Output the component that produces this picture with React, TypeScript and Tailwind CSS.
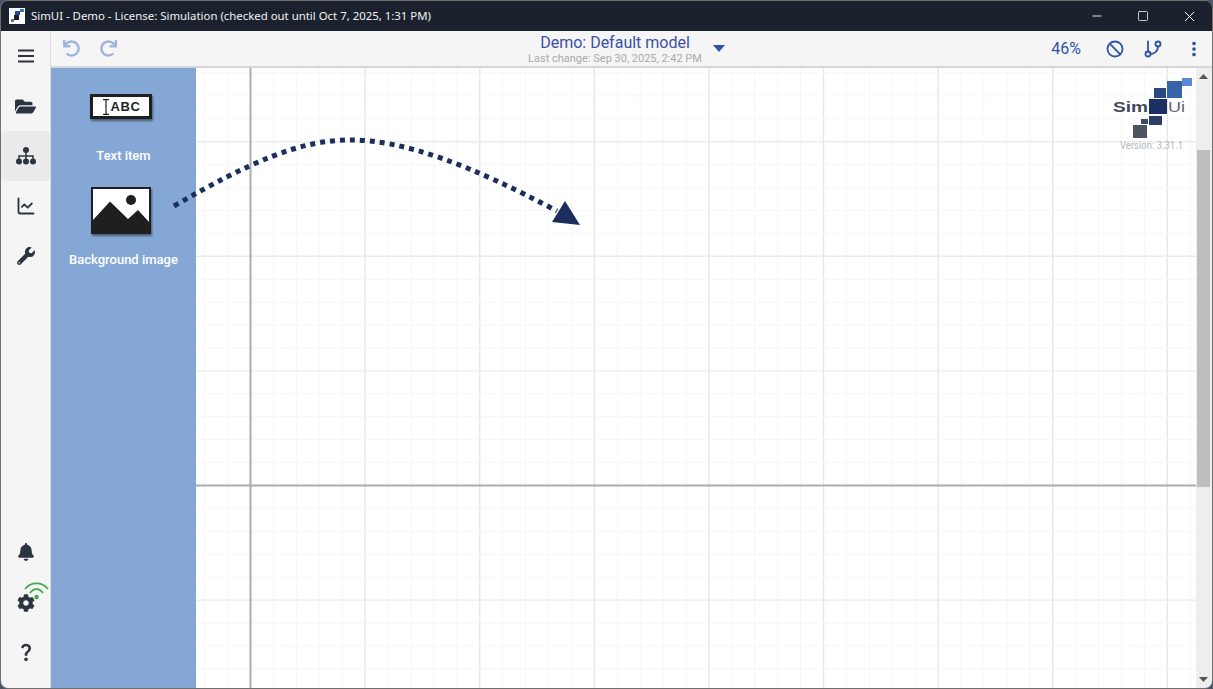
import React from 'react';
import { Ban, ChartLine, GitBranch, Minus, Square, X } from 'lucide-react';
import { FaBell, FaCog, FaFolderOpen, FaRedo, FaUndo, FaWrench } from 'react-icons/fa';
import { MdMoreVert, MdQuestionMark } from 'react-icons/md';

const MINOR_STEP = 22.92;
const AXIS_X = 250.5;
const AXIS_Y = 485.5;

function gridLines(start: number, end: number) {
  const values: number[] = [];
  for (let value = start; value <= end; value += MINOR_STEP) {
    values.push(value);
  }
  return values;
}

function CanvasGrid() {
  const xs = gridLines(AXIS_X - 3 * MINOR_STEP, 1196);
  const ys = gridLines(AXIS_Y - 18 * MINOR_STEP, 688);

  return (
    <svg className="absolute inset-0" width="1000" height="620" viewBox="196 68 1000 620">
      {xs.map((x, index) => {
        const isMajor = (index - 3) % 5 === 0;
        return <line key={x} x1={x} x2={x} y1="68" y2="688" stroke={isMajor ? '#e6e6e6' : '#f6f6f6'} strokeWidth={isMajor ? 1.4 : 1} />;
      })}
      {ys.map((y, index) => {
        const isMajor = (index - 18) % 5 === 0;
        return <line key={y} x1="196" x2="1196" y1={y} y2={y} stroke={isMajor ? '#ececec' : '#f6f6f6'} strokeWidth={isMajor ? 1.4 : 1} />;
      })}
      <line x1={AXIS_X} x2={AXIS_X} y1="68" y2="688" stroke="#adadad" strokeWidth="2" />
      <line x1="196" x2="1196" y1={AXIS_Y} y2={AXIS_Y} stroke="#adadad" strokeWidth="2" />
    </svg>
  );
}

function HintArrow() {
  return (
    <svg className="absolute left-[160px] top-[120px]" width="430" height="120" viewBox="160 120 430 120">
      <path
        d="M174 206 C 250 162, 300 140, 350 140 C 405 140, 470 165, 557 211"
        fill="none"
        stroke="#1c2f5c"
        strokeWidth="5"
        strokeDasharray="5 5"
      />
      <polygon points="565,201 552,222 580,225" fill="#1c2f5c" />
    </svg>
  );
}

function Logo() {
  return (
    <svg className="absolute left-[1105px] top-[72px]" width="92" height="84" viewBox="1105 72 92 84">
      <rect x="1182" y="78" width="10" height="8" fill="#5b87d8" />
      <rect x="1167" y="81" width="15" height="17" fill="#3763a8" />
      <rect x="1154" y="88" width="12" height="10" fill="#274a86" />
      <rect x="1149" y="99" width="18" height="15" fill="#1c2f62" />
      <rect x="1149" y="116" width="13" height="9" fill="#2b3f66" />
      <rect x="1141" y="119" width="7" height="5" fill="#3a4a68" />
      <rect x="1133" y="125" width="14" height="13" fill="#4e5560" />
      <text x="1113" y="112" textLength="35" lengthAdjust="spacingAndGlyphs" fontFamily="Liberation Sans, sans-serif" fontSize="14" fontWeight="700" fill="#3d4a59">Sim</text>
      <text x="1168" y="112" textLength="17" lengthAdjust="spacingAndGlyphs" fontFamily="Liberation Sans, sans-serif" fontSize="14" fill="#5a6572">Ui</text>
      <text x="1120" y="149" textLength="63" lengthAdjust="spacingAndGlyphs" fontFamily="Roboto, sans-serif" fontSize="10" fill="#b4b8bd">Version: 3.31.1</text>
    </svg>
  );
}

function AppMark() {
  return (
    <svg width="16" height="16" viewBox="0 0 16 16">
      <rect width="16" height="16" fill="#ffffff" />
      <rect x="11" y="1" width="4" height="3" fill="#3b78c9" />
      <rect x="6" y="3" width="5" height="4" fill="#1f4f92" />
      <rect x="5" y="7" width="5" height="5" fill="#1b222d" />
      <rect x="2" y="11" width="3" height="3" fill="#6b7280" />
    </svg>
  );
}

function ModelTreeIcon() {
  return (
    <svg width="20" height="18" viewBox="0 0 20 18" fill="#2b3440">
      <circle cx="10" cy="3" r="3" />
      <circle cx="3" cy="14.500" r="3" />
      <circle cx="10" cy="14.500" r="3" />
      <circle cx="17" cy="14.500" r="3" />
      <path d="M10 5v7M3 12V9h14v3" fill="none" stroke="#2b3440" strokeWidth="1.500" />
    </svg>
  );
}

function SideButton({ active, children }: { active?: boolean; children: React.ReactNode }) {
  return (
    <div className={`relative flex h-[50px] w-full items-center justify-center rounded text-[#2b3440] ${active ? 'bg-[#ebebeb]' : ''}`}>
      {children}
    </div>
  );
}

function Sidebar() {
  return (
    <div className="flex w-[50px] shrink-0 flex-col border-r border-[#dcdcdc] bg-[#f5f5f5] pb-[11px]">
      <SideButton>
        <svg width="16" height="14" viewBox="0 0 16 14" fill="#2b3440">
          <rect y="0.500" width="16" height="2" />
          <rect y="6" width="16" height="2" />
          <rect y="11.500" width="16" height="2" />
        </svg>
      </SideButton>
      <SideButton><FaFolderOpen size={21} /></SideButton>
      <SideButton active><ModelTreeIcon /></SideButton>
      <SideButton><ChartLine size={20} strokeWidth={2.2} /></SideButton>
      <SideButton><FaWrench size={18} /></SideButton>
      <div className="flex-1" />
      <SideButton><FaBell size={18} /></SideButton>
      <SideButton>
        <FaCog size={18} className="mt-[2px]" />
        <svg className="absolute left-[23px] top-[3px]" width="26" height="20" viewBox="0 0 26 20" fill="none" stroke="#43a84e" strokeWidth="1.8">
          <path d="M1 9 C 7 1.500, 18 1.500, 24 9" />
          <path d="M6 13 C 9.500 7.700, 15.500 7.700, 19 13" />
          <circle cx="12.500" cy="17" r="2.200" fill="#43a84e" stroke="none" />
        </svg>
      </SideButton>
      <SideButton><MdQuestionMark size={22} /></SideButton>
    </div>
  );
}

function Toolbar() {
  return (
    <div className="relative flex h-[37px] shrink-0 items-center border-b-2 border-[#d6d6d6] bg-[#f5f5f5] text-[#2f55a4]">
      <div className="flex items-center gap-[20px] pl-[12px] text-[#9fb4dc]">
        <FaUndo size={17} />
        <FaRedo size={17} />
      </div>
      <div className="absolute left-[458px] top-0 flex w-[212px] flex-col items-center font-['Roboto',sans-serif]">
        <div className="mt-[2px] text-[16px] leading-[20px] text-[#3b50a6]">Demo: Default model</div>
        <div className="text-[11px] leading-[12px] whitespace-nowrap text-[#a9a9a9]">Last change: Sep 30, 2025, 2:42 PM</div>
      </div>
      <svg className="absolute left-[662px] top-[14px]" width="12" height="7" viewBox="0 0 12 7" fill="#2f55a4">
        <polygon points="0,0 12,0 6,7" />
      </svg>
      <div className="ml-auto flex items-center pr-[8px]">
        <span className="mr-[25px] font-['Roboto',sans-serif] text-[16px]">46%</span>
        <Ban size={18} strokeWidth={2.4} className="mr-[19px]" />
        <GitBranch size={20} strokeWidth={2.2} className="mr-[20px]" />
        <MdMoreVert size={22} className="-mr-[1px]" />
      </div>
    </div>
  );
}

function PalettePanel() {
  return (
    <div className="flex w-[145px] shrink-0 flex-col items-center bg-[#84a7d5] font-['Roboto',sans-serif] text-[13px] font-medium text-white">
      <div className="mt-[26px] -ml-[5px] flex h-[25px] w-[62px] items-center justify-center gap-[1px] border-[3px] border-[#1f1f1f] bg-white shadow-[1px_2px_2px_rgba(0,0,0,0.45)]">
        <svg width="8" height="16" viewBox="0 0 8 16" fill="none" stroke="#1f1f1f" strokeWidth="1.200">
          <path d="M1 0.600h6M1 15.400h6M4 0.600v14.800" />
        </svg>
        <span className="font-['Liberation_Sans',sans-serif] text-[13px] leading-none font-bold tracking-[0.6px] text-[#1f1f1f]">ABC</span>
      </div>
      <div className="mt-[29px] leading-[16px]">Text item</div>
      <svg className="mt-[23px] -ml-[5px] drop-shadow-[1px_2px_1px_rgba(0,0,0,0.45)]" width="60" height="47" viewBox="0 0 60 47">
        <rect width="60" height="47" fill="#1f1f1f" />
        <rect x="2" y="2" width="56" height="34" fill="#ffffff" />
        <polygon points="2,33 19,14.500 37,32 47,23 58,35 58,45 2,45" fill="#1f1f1f" />
        <circle cx="40" cy="13" r="5" fill="#1f1f1f" />
      </svg>
      <div className="mt-[18px] leading-[16px]">Background image</div>
    </div>
  );
}

function CanvasScrollbar() {
  return (
    <div className="relative w-[16px] shrink-0 bg-[#eeeeee]">
      <svg className="absolute left-[3px] top-[6px]" width="9" height="5" viewBox="0 0 9 5" fill="#555555">
        <polygon points="0,5 9,5 4.500,0" />
      </svg>
      <div className="absolute left-[1px] top-[82px] h-[337px] w-[13px] bg-[#bdbdbd]" />
      <svg className="absolute bottom-[6px] left-[3px]" width="9" height="5" viewBox="0 0 9 5" fill="#555555">
        <polygon points="0,0 9,0 4.500,5" />
      </svg>
    </div>
  );
}

export default function App() {
  return (
    <div className="relative h-[689px] w-[1213px] overflow-hidden bg-[#4a5568] font-['Noto_Sans',sans-serif]">
      <div className="flex h-full flex-col overflow-hidden rounded-lg border border-[#6f6f6f]">
        <div className="flex h-[30px] shrink-0 items-center bg-[#1b222d] text-white">
          <div className="ml-[8px] mr-[6px]"><AppMark /></div>
          <span className="text-[11.4px] leading-none whitespace-nowrap text-[#f2f2f2]">SimUI - Demo - License: Simulation (checked out until Oct 7, 2025, 1:31 PM)</span>
          <div className="ml-auto flex items-center">
            <div className="flex w-[46px] justify-center"><Minus size={14} strokeWidth={1.5} /></div>
            <div className="flex w-[46px] justify-center"><Square size={12} strokeWidth={1.5} /></div>
            <div className="flex w-[46px] justify-center"><X size={17} strokeWidth={1.4} /></div>
          </div>
        </div>
        <div className="flex min-h-0 flex-1">
          <Sidebar />
          <div className="flex min-w-0 flex-1 flex-col">
            <Toolbar />
            <div className="flex min-h-0 flex-1">
              <PalettePanel />
              <div className="relative flex-1 overflow-hidden bg-white">
                <CanvasGrid />
              </div>
              <CanvasScrollbar />
            </div>
          </div>
        </div>
      </div>
      <HintArrow />
      <Logo />
    </div>
  );
}
